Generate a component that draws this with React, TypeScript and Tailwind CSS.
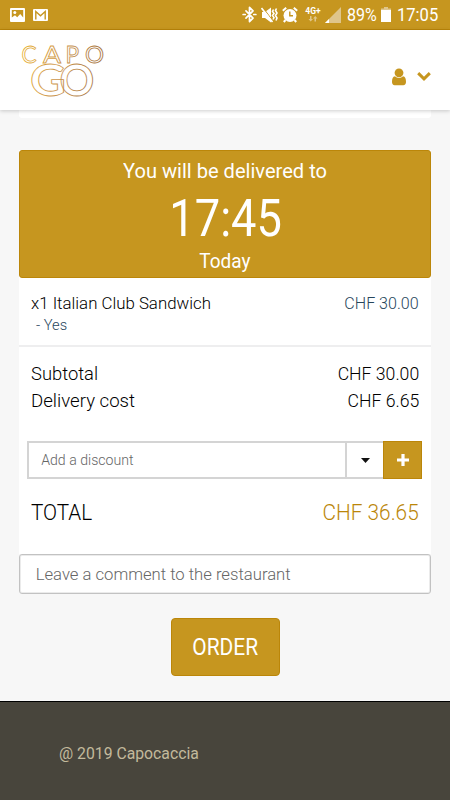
import { BluetoothConnected } from "lucide-react";

function StatusBar() {
  return (
    <div className="flex h-[30px] items-center justify-between border-b border-[#bb8609] bg-[#c6961f] pl-2.5 pr-3 text-white">
      <div className="flex items-center gap-2">
        <svg width="15" height="14" viewBox="0 0 15 14">
          <rect width="15" height="14" rx="1" fill="#fff" />
          <path d="M1.800 2h11.400v7.500l-3-3.500-3 3.200-2.200-2-3.200 2.300z" fill="#c6961f" />
          <circle cx="4.800" cy="4.500" r="1.500" fill="#fff" />
        </svg>
        <svg width="15" height="12" viewBox="0 0 15 12">
          <rect width="15" height="12" rx="1" fill="#fff" />
          <path d="M2.800 10.500V2.600l4.700 4.200 4.700-4.200v7.900" fill="none" stroke="#c6961f" strokeWidth="1.400" />
        </svg>
      </div>
      <div className="flex h-full items-center">
        <BluetoothConnected size={17} strokeWidth={2.4} className="-ml-1" />
        <svg className="ml-[3px]" width="17" height="16" viewBox="0 0 17 16">
          <path d="M1 5h3l6-4.500v15L4 11H1z" fill="#fff" />
          <path d="m1.500 0 10.500 14" stroke="#c6961f" strokeWidth="1" />
          <path d="m.5 1 11 14" stroke="#fff" strokeWidth="1.600" />
          <path d="m12.500 2.500-1 2 1.500 2-1.500 2 1.500 2-1 2M15.500 1.500l-1 2 1.500 2.500-1.500 2.500 1.500 2.500-1 2.500" fill="none" stroke="#fff" strokeWidth="1.600" />
        </svg>
        <svg className="ml-1" width="16" height="16" viewBox="0 0 16 16">
          <circle cx="8" cy="8.500" r="6.500" fill="#fff" />
          <path d="m.8 3.800 3.400-3M15.200 3.800l-3.400-3M3.500 13l-1.700 2M12.500 13l1.700 2" stroke="#fff" strokeWidth="2" />
          <path d="M7.800 4.500v4.300H11" fill="none" stroke="#c6961f" strokeWidth="1.400" />
        </svg>
        <div className="ml-[7px] flex w-4 flex-col items-center">
          <span className="text-[8.500px] font-bold leading-[9px]">4G+</span>
          <svg width="10" height="6" viewBox="0 0 10 6" fill="#e0c68b">
            <path d="M2 0h1.500v3H5L2.700 5.500.5 3H2zM6.500 5.500H8V2.500h1.500L7.200 0 5 2.500h1.500z" />
          </svg>
        </div>
        <svg className="ml-1" width="16" height="16" viewBox="0 0 16 16">
          <path d="M16 0v16H0z" fill="#dfc58a" />
          <path d="M4 12v4H0z" fill="#fff" />
        </svg>
        <span className="ml-1.5 w-[34px] text-lg leading-none">
          <span className="inline-block origin-left scale-x-[.89]">89%</span>
        </span>
        <svg width="10" height="15" viewBox="0 0 10 15">
          <path d="M3 0h4v1.500h3V4H0V1.500h3z" fill="#e0c68b" />
          <path d="M0 3h10v12H0z" fill="#fff" />
        </svg>
        <span className="ml-1.5 w-[41px] text-lg leading-none">
          <span className="inline-block origin-left scale-x-[.92]">17:05</span>
        </span>
      </div>
    </div>
  );
}

function Logo() {
  return (
    <svg width="110" height="80" viewBox="0 0 110 80" className="font-[Lato]">
      <defs>
        <linearGradient id="gold" gradientUnits="userSpaceOnUse" x1="21" y1="10" x2="104" y2="30">
          <stop offset="0" stopColor="#e9b02e" />
          <stop offset=".5" stopColor="#cc9448" />
          <stop offset="1" stopColor="#a06c35" />
        </linearGradient>
      </defs>
      <g fill="none" stroke="url(#gold)" strokeWidth=".8">
        <text x="21.500" y="32.500" fontSize="22.500">C</text>
        <text x="43" y="32.500" fontSize="22.500" textLength="18" lengthAdjust="spacingAndGlyphs">A</text>
        <text x="65.500" y="32.500" fontSize="22.500">P</text>
        <text x="85" y="32.500" fontSize="22.500" textLength="19" lengthAdjust="spacingAndGlyphs">O</text>
        <g className="font-bold">
          <text x="30" y="66" fontSize="43" textLength="36" lengthAdjust="spacingAndGlyphs">G</text>
          <text x="59.500" y="66" fontSize="43">O</text>
        </g>
      </g>
    </svg>
  );
}

function Header() {
  return (
    <header className="relative flex h-20 items-center justify-between bg-white pr-[19px] shadow-[0_1px_4px_rgba(0,0,0,0.2)]">
      <Logo />
      <div className="flex items-center gap-[11px] pt-3.5">
        <svg width="14" height="18" viewBox="0 0 14 18" fill="#c6961f">
          <circle cx="7" cy="4.800" r="4.400" />
          <path d="M3 8.300c2.300 2.200 5.700 2.200 8 0 2.200.3 3 2.700 3 5.700 0 2-1 3.200-2.700 3.200H2.700C1 17.200 0 16 0 14c0-3 .8-5.400 3-5.700z" />
        </svg>
        <svg width="14" height="10" viewBox="0 0 14 10">
          <path d="m1.200 1.200 5.800 5.600 5.800-5.600" fill="none" stroke="#c6961f" strokeWidth="3" />
        </svg>
      </div>
    </header>
  );
}

function DeliveryBanner() {
  return (
    <div className="flex h-32 flex-col items-center rounded-[3px] border border-[#bb8609] bg-[#c6961f] text-white">
      <p className="mt-[9px] scale-x-[1.03] text-[19.500px] leading-6">You will be delivered to</p>
      <p className="mt-[5px] scale-x-[.87] pl-0.5 text-[52px] leading-[60px]">17:45</p>
      <p className="scale-x-[.95] text-xl leading-6">Today</p>
    </div>
  );
}

function Discount() {
  return (
    <div className="mx-2 mt-[27px] flex h-[38px]">
      <div className="flex w-80 border-2 border-[#d4d4d4]">
        <input
          className="w-full origin-left scale-x-[.94] pl-[13px] text-[15px] font-light outline-none placeholder:text-[#666]"
          placeholder="Add a discount"
        />
      </div>
      <button className="flex w-9 items-center justify-center border-y-2 border-[#d4d4d4]">
        <svg width="9" height="5" viewBox="0 0 9 5">
          <path d="M0 0h9L4.500 5z" fill="#111" />
        </svg>
      </button>
      <button className="flex w-[39px] items-center justify-center border border-[#bb8609] bg-[#c6961f]">
        <svg width="12" height="12" viewBox="0 0 12 12">
          <path d="M6 0v12M0 6h12" stroke="#fff" strokeWidth="3.200" />
        </svg>
      </button>
    </div>
  );
}

export default function App() {
  return (
    <div className="h-[800px] w-[450px] overflow-hidden bg-[#f7f7f7] font-[Roboto,sans-serif] text-black">
      <StatusBar />
      <Header />
      <main className="flex h-[591px] flex-col px-[19px]">
        <div className="h-2 shrink-0 rounded-b-[3px] bg-white" />
        <section className="mt-8 h-[404px] shrink-0 bg-white">
          <DeliveryBanner />
          <div className="h-[69px] border-b-2 border-[#eeeeef] px-3 pt-[14px]">
            <div className="flex justify-between text-[17px] font-light leading-[22px]">
              <span className="origin-left scale-x-[.99]">x1 Italian Club Sandwich</span>
              <span className="origin-right scale-x-[.945] text-[#27465c]">CHF 30.00</span>
            </div>
            <p className="origin-left scale-x-[.98] pl-[5px] text-[15px] font-light leading-[22px] text-[#27465c]">- Yes</p>
          </div>
          <div className="px-3 pt-[13px] text-lg font-light leading-[27px]">
            <div className="flex justify-between">
              <span className="origin-left scale-x-[1.02]">Subtotal</span>
              <span className="origin-right scale-x-[.98]">CHF 30.00</span>
            </div>
            <div className="flex justify-between">
              <span className="origin-left scale-x-[1.035]">Delivery cost</span>
              <span className="origin-right scale-x-[.98]">CHF 6.65</span>
            </div>
          </div>
          <Discount />
          <div className="mt-5 flex justify-between px-3 text-[22px] font-light leading-7">
            <span className="origin-left scale-x-[.94]">TOTAL</span>
            <span className="origin-right scale-x-[.945] text-[#bb8609]">CHF 36.65</span>
          </div>
        </section>
        <div className="flex h-10 shrink-0 rounded-[3px] border border-[#c2c2c2] bg-white shadow-[inset_0_0_0_1px_#ebebeb]">
          <input
            className="w-full origin-left scale-x-[.98] bg-transparent pl-4 pt-0.5 text-[17px] font-light outline-none placeholder:text-[#666]"
            placeholder="Leave a comment to the restaurant"
          />
        </div>
        <button className="mt-6 h-[58px] w-[109px] shrink-0 self-center rounded-[4px] border border-[#bb8609] bg-[#c6961f] pt-0.5 text-[23px] text-white">
          <span className="inline-block scale-x-[.91]">ORDER</span>
        </button>
      </main>
      <footer className="h-[99px] border-t border-black bg-[#48453c] px-[59px] pt-10 text-base leading-6 text-[#c3ba9c]">
        <p className="origin-left scale-x-[.985]">@ 2019 Capocaccia</p>
      </footer>
    </div>
  );
}
